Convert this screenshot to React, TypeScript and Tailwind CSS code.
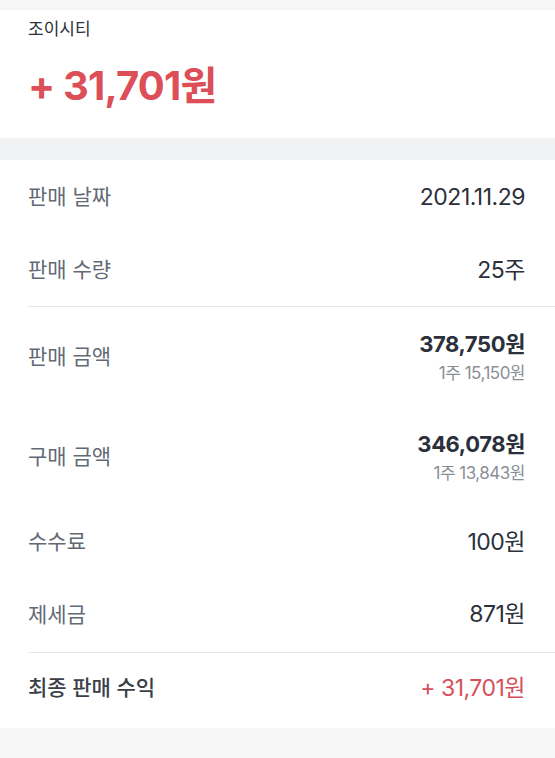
import React from 'react';

const FONT = "font-['Inter','Noto_Sans_CJK_KR',sans-serif]";

interface SimpleRow {
  label: string;
  value: string;
  height: string;
}

const Divider: React.FC = () => <div className="ml-7 h-px bg-[#e6e7e9]" />;

const Row: React.FC<SimpleRow> = ({ label, value, height }) => (
  <div className={`flex items-center justify-between pl-7 pr-[30px] ${height}`}>
    <span className="text-[21px] text-[#646a75]">{label}</span>
    <span className="text-[23px] tracking-[-0.5px] text-[#2b303a]">{value}</span>
  </div>
);

const AmountRow: React.FC<{ label: string; total: string; perShare: string }> = ({
  label,
  total,
  perShare
}) => (
  <div className="flex h-[100px] items-center justify-between pl-7 pr-[30px]">
    <span className="text-[21px] text-[#646a75]">{label}</span>
    <div className="flex flex-col items-end">
      <span className="text-[22px] font-bold leading-[28px] tracking-[-0.4px] text-[#2b303a]">{total}</span>
      <span className="mt-[4px] text-[17px] leading-[22px] tracking-[-0.5px] text-[#8a8f97]">{perShare}</span>
    </div>
  </div>
);

export default function App() {
  return (
    <div className={`min-h-[758px] w-full bg-[#f6f6f7] ${FONT}`}>
      <div className="h-[10px] bg-[#f6f6f7]" />

      <section className="h-[128px] bg-white pl-7 pt-[8px]">
        <div className="text-[17px] leading-[22px] text-[#2b303a]">조이시티</div>
        <div className="mt-[22px] text-[40px] font-bold leading-[48px] tracking-[-0.8px] text-[#dd4f58]">
          + 31,701원
        </div>
      </section>

      <div className="h-[22px] bg-[#f1f2f4]" />

      <section className="bg-white">
        <Row label="판매 날짜" value="2021.11.29" height="h-[74px]" />
        <Row label="판매 수량" value="25주" height="h-[72px]" />
        <Divider />
        <AmountRow label="판매 금액" total="378,750원" perShare="1주 15,150원" />
        <AmountRow label="구매 금액" total="346,078원" perShare="1주 13,843원" />
        <Row label="수수료" value="100원" height="h-[70px]" />
        <Row label="제세금" value="871원" height="h-[75px]" />
        <Divider />
        <div className="flex h-[75px] items-center justify-between pb-[5px] pl-7 pr-[30px]">
          <span className="text-[21px] font-medium text-[#3a3f48]">최종 판매 수익</span>
          <span className="text-[23px] tracking-[-0.5px] text-[#d6505a]">+ 31,701원</span>
        </div>
      </section>
    </div>
  );
}
